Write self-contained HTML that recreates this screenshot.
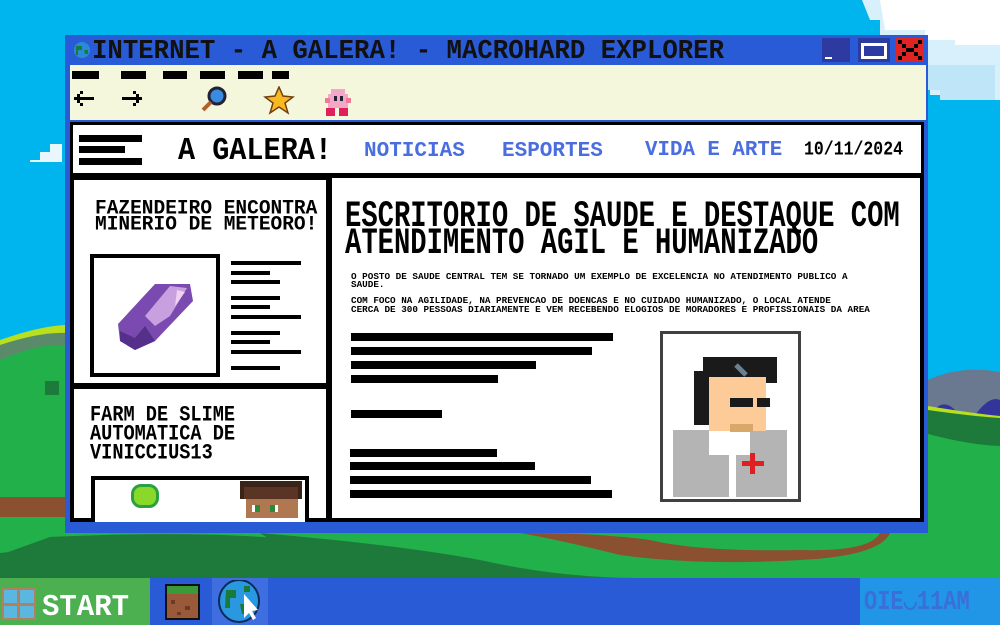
<!DOCTYPE html>
<html><head><meta charset="utf-8"><style>
*{margin:0;padding:0;box-sizing:border-box}
body{width:1000px;height:625px;overflow:hidden;position:relative;background:#00b4ee;font-family:"Liberation Mono",monospace;font-weight:bold}
.a{position:absolute}
.t{position:absolute;white-space:nowrap;line-height:1;transform-origin:0 0}
.b{position:absolute;background:#000}
</style></head><body>
<svg class="a" style="left:0;top:0" width="1000" height="625">
<path d="M862 0 H1000 V100 H960 V95 H930 V80 H928 V35 H880 V20 H870 Z" fill="#d8f0fb"/>
<path d="M880 0 H1000 V45 H955 V40 H925 V30 H885 Z" fill="#fff"/>
<path d="M928 65 H995 V100 H940 V90 H928Z" fill="#bfe6f8"/>
<path d="M30 160 h10 v-8 h10 v-8 h12 v18 h-32z" fill="#e8f6fd"/>
<path d="M928 380 Q960 365 1000 372 V420 H928 Z" fill="#6a7890"/>
<path d="M928 420 Q940 395 955 410 L960 420 Z M975 415 Q990 395 1000 400 V420 Z" fill="#33359a"/>
<path d="M0 340 Q40 326 65 325 V570 H0 Z" fill="#b8e020"/>
<path d="M0 345 Q40 332 65 333 V570 H0Z" fill="#5a8a6a"/>
<path d="M0 360 Q40 343 65 345 V570 H0Z" fill="#22b04b"/>
<path d="M928 406 Q970 413 1000 416 V578 H928Z" fill="#b8e020"/>
<path d="M928 410 Q970 416 1000 418 V578 H928Z" fill="#1e7a3a"/>
<path d="M928 434 Q970 445 1000 446 V578 H928Z" fill="#22b04b"/>
<rect x="0" y="520" width="1000" height="60" fill="#22b04b"/>
<path d="M0 553 Q20 550 45 556 L50 537 Q200 530 300 540 Q330 548 370 578 H0Z" fill="#1e7a3a"/>
<path d="M50 537 Q300 530 420 555 Q480 570 400 578 H0 V555Z" fill="#1e7a3a"/>
<path d="M260 533 Q400 545 480 560 Q560 578 640 578 H380 Q300 560 260 533Z" fill="#1e7a3a"/>
<path d="M520 533 Q560 540 620 555 Q700 566 800 560 Q880 556 890 533 H880 Q870 552 800 550 Q700 552 650 540 Q600 533 520 533Z" fill="#8a5030"/>
<path d="M0 497 H65 V517 H0Z" fill="#8a5030"/>
<rect x="45" y="381" width="14" height="14" fill="#1e7a3a"/>
</svg>

<div class="a" style="left:65px;top:35px;width:863px;height:498px;background:#2a5bd7"></div>
<div class="a" style="left:70px;top:65px;width:856px;height:55px;background:#f4f7dc"></div>
<svg class="a" style="left:72px;top:40px" width="20" height="20"><circle cx="10" cy="10" r="8" fill="#2a8ad8"/><path d="M4 6 h6 v4 h-4 v5 h-2z M12 10 h4 v4 h-3z" fill="#1a7a3a"/></svg>
<div class="t" style="left:92px;top:38px;font-size:25.7px;color:#111;transform:scaleY(1.05)">INTERNET - A GALERA! - MACROHARD EXPLORER</div>
<div class="a" style="left:822px;top:38px;width:28px;height:24px;background:#2d3aa0"></div>
<div class="a" style="left:825px;top:57px;width:7px;height:2px;background:#fff"></div>
<div class="a" style="left:858px;top:38px;width:32px;height:24px;background:#2d3aa0"></div>
<div class="a" style="left:861px;top:43px;width:26px;height:16px;border:3px solid #fff;background:#2d3aa0"></div>
<svg class="a" style="left:896px;top:38px" width="28" height="24"><rect width="28" height="24" fill="#e02424"/><path d="M2 2h4v4h-4zM22 2h4v4h-4zM6 6h4v4h-4zM18 6h4v4h-4zM10 10h8v4h-8zM6 14h4v4h-4zM18 14h4v4h-4zM2 18h4v4h-4zM22 18h4v4h-4z" fill="#000"/></svg>
<div class="b" style="left:72px;top:71px;width:27px;height:8px"></div>
<div class="b" style="left:121px;top:71px;width:25px;height:8px"></div>
<div class="b" style="left:163px;top:71px;width:24px;height:8px"></div>
<div class="b" style="left:200px;top:71px;width:25px;height:8px"></div>
<div class="b" style="left:238px;top:71px;width:25px;height:8px"></div>
<div class="b" style="left:272px;top:71px;width:17px;height:8px"></div>
<svg class="a" style="left:72px;top:86px" width="300" height="32">
<path d="M2 11h20v3H2z M5 8h3v3H5z M8 5h3v3H8z M5 14h3v3H5z M8 17h3v3H8z" fill="#000"/>
<path d="M50 11h20v3H50z M64 8h3v3h-3z M61 5h3v3h-3z M64 14h3v3h-3z M61 17h3v3h-3z" fill="#000"/>
<circle cx="145" cy="10" r="8" fill="#3a8ae0" stroke="#223" stroke-width="3"/>
<path d="M139 16 L131 24" stroke="#b06030" stroke-width="4"/>
<path d="M207 1 L211 10 L221 11 L213 17 L216 27 L207 21 L198 27 L201 17 L193 11 L203 10Z" fill="#f8b820" stroke="#704010" stroke-width="1.5"/>
<rect x="256" y="8" width="20" height="14" fill="#f4a8c8"/><rect x="259" y="3" width="14" height="6" fill="#f4a8c8"/>
<rect x="262" y="10" width="3" height="5" fill="#223"/><rect x="268" y="10" width="3" height="5" fill="#223"/>
<rect x="253" y="12" width="5" height="5" fill="#f07898"/><rect x="274" y="12" width="5" height="5" fill="#f07898"/>
<rect x="254" y="22" width="9" height="8" fill="#e0205a"/><rect x="267" y="22" width="9" height="8" fill="#e0205a"/>
</svg>

<div class="a" style="left:70px;top:122px;width:854px;height:400px;background:#000"></div>
<div class="a" style="left:73px;top:125px;width:848px;height:48px;background:#fff"></div>
<div class="b" style="left:79px;top:135px;width:63px;height:7px"></div>
<div class="b" style="left:79px;top:146px;width:46px;height:7px"></div>
<div class="b" style="left:79px;top:158px;width:63px;height:7px"></div>
<div class="t" style="left:178px;top:136px;font-size:28.5px;color:#000;transform:scaleY(1.1)">A GALERA!</div>
<div class="t" style="left:364px;top:141px;font-size:21px;color:#4a6ee0">NOTICIAS</div>
<div class="t" style="left:502px;top:141px;font-size:21px;color:#4a6ee0">ESPORTES</div>
<div class="t" style="left:645px;top:141px;font-size:20.8px;color:#4a6ee0">VIDA E ARTE</div>
<div class="t" style="left:804px;top:140px;font-size:16.5px;color:#000;transform:scaleY(1.2)">10/11/2024</div>

<div class="a" style="left:74px;top:180px;width:252px;height:203px;background:#fff"></div>
<div class="a" style="left:74px;top:389px;width:252px;height:129px;background:#fff"></div>
<div class="a" style="left:332px;top:178px;width:588px;height:340px;background:#fff"></div>

<div class="t" style="left:95px;top:199px;font-size:19.5px;color:#000;transform:scaleY(1.05)">FAZENDEIRO ENCONTRA</div>
<div class="t" style="left:95px;top:215px;font-size:19.5px;color:#000;transform:scaleY(1.05)">MINERIO DE METEORO!</div>
<div class="a" style="left:90px;top:254px;width:130px;height:123px;border:4px solid #000;background:#fff"></div>
<svg class="a" style="left:115px;top:276px" width="80" height="80"><path d="M40 8 L75 8 L78 25 L40 65 L20 74 L5 65 L3 48Z" fill="#7a4ab0"/><path d="M55 10 L72 12 L55 40 L40 50 L30 40Z" fill="#c8a0e0"/><path d="M62 14 L70 16 L60 30Z" fill="#f0d0f0"/><path d="M5 55 L20 62 L30 50 L40 65 L20 74 L5 65Z" fill="#54308a"/></svg>
<div class="b" style="left:231px;top:261px;width:70px;height:4px"></div>
<div class="b" style="left:231px;top:271px;width:39px;height:4px"></div>
<div class="b" style="left:231px;top:280px;width:49px;height:4px"></div>
<div class="b" style="left:231px;top:296px;width:49px;height:4px"></div>
<div class="b" style="left:231px;top:305px;width:39px;height:4px"></div>
<div class="b" style="left:231px;top:315px;width:70px;height:4px"></div>
<div class="b" style="left:231px;top:331px;width:49px;height:4px"></div>
<div class="b" style="left:231px;top:340px;width:39px;height:4px"></div>
<div class="b" style="left:231px;top:350px;width:70px;height:4px"></div>
<div class="b" style="left:231px;top:366px;width:49px;height:4px"></div>

<div class="t" style="left:90px;top:405px;font-size:18.6px;color:#000;transform:scaleY(1.2)">FARM DE SLIME</div>
<div class="t" style="left:90px;top:424px;font-size:18.6px;color:#000;transform:scaleY(1.2)">AUTOMATICA DE</div>
<div class="t" style="left:90px;top:443px;font-size:18.6px;color:#000;transform:scaleY(1.2)">VINICCIUS13</div>
<div class="a" style="left:91px;top:476px;width:218px;height:46px;border:4px solid #000;border-bottom:none;background:#fff"></div>
<div class="a" style="left:131px;top:484px;width:28px;height:24px;border-radius:10px;background:#8ad82a;border:3px solid #2aa040"></div>
<svg class="a" style="left:240px;top:481px" width="62" height="37"><rect x="0" y="0" width="62" height="18" fill="#3a2418"/><rect x="6" y="18" width="52" height="19" fill="#b07850"/><rect x="4" y="6" width="54" height="12" fill="#5a3424"/><rect x="12" y="24" width="8" height="7" fill="#fff"/><rect x="15" y="24" width="5" height="7" fill="#2a8a3a"/><rect x="30" y="24" width="8" height="7" fill="#fff"/><rect x="30" y="24" width="5" height="7" fill="#2a8a3a"/></svg>

<div class="t" style="left:345px;top:199px;font-size:27.2px;color:#000;transform:scaleY(1.35)">ESCRITORIO DE SAUDE E DESTAQUE COM</div>
<div class="t" style="left:345px;top:226px;font-size:27.2px;color:#000;transform:scaleY(1.35)">ATENDIMENTO AGIL E HUMANIZADO</div>
<div class="t" style="left:351px;top:272px;font-size:9.3px;color:#000">O POSTO DE SAUDE CENTRAL TEM SE TORNADO UM EXEMPLO DE EXCELENCIA NO ATENDIMENTO PUBLICO A</div>
<div class="t" style="left:351px;top:280px;font-size:9.3px;color:#000">SAUDE.</div>
<div class="t" style="left:351px;top:296px;font-size:9.3px;color:#000">COM FOCO NA AGILIDADE, NA PREVENCAO DE DOENCAS E NO CUIDADO HUMANIZADO, O LOCAL ATENDE</div>
<div class="t" style="left:351px;top:305px;font-size:9.3px;color:#000">CERCA DE 300 PESSOAS DIARIAMENTE E VEM RECEBENDO ELOGIOS DE MORADORES E PROFISSIONAIS DA AREA</div>
<div class="b" style="left:351px;top:333px;width:262px;height:8px"></div>
<div class="b" style="left:351px;top:347px;width:241px;height:8px"></div>
<div class="b" style="left:351px;top:361px;width:185px;height:8px"></div>
<div class="b" style="left:351px;top:375px;width:147px;height:8px"></div>
<div class="b" style="left:351px;top:410px;width:91px;height:8px"></div>
<div class="b" style="left:350px;top:449px;width:147px;height:8px"></div>
<div class="b" style="left:350px;top:462px;width:185px;height:8px"></div>
<div class="b" style="left:350px;top:476px;width:241px;height:8px"></div>
<div class="b" style="left:350px;top:490px;width:262px;height:8px"></div>
<svg class="a" style="left:660px;top:331px" width="142" height="171">
<rect x="1.5" y="1.5" width="138" height="168" fill="#fff" stroke="#404040" stroke-width="3"/>
<rect x="13" y="99" width="114" height="67" fill="#b4b4b4"/>
<rect x="69" y="99" width="7" height="67" fill="#fff"/>
<rect x="49" y="99" width="41" height="25" fill="#fff"/>
<rect x="49" y="46" width="57" height="54" fill="#fdcb98"/>
<rect x="43" y="26" width="74" height="20" fill="#1a1a1a"/>
<rect x="106" y="46" width="11" height="6" fill="#1a1a1a"/>
<rect x="34" y="40" width="15" height="54" fill="#1a1a1a"/>
<rect x="70" y="67" width="23" height="9" fill="#1a1a1a"/><rect x="97" y="67" width="13" height="9" fill="#1a1a1a"/>
<rect x="70" y="93" width="23" height="8" fill="#d8a868"/>
<path d="M76 34 L86 44" stroke="#6a8090" stroke-width="5"/>
<rect x="82" y="130" width="22" height="5" fill="#e02020"/><rect x="90" y="122" width="5" height="21" fill="#e02020"/>
</svg>

<div class="a" style="left:0;top:578px;width:150px;height:47px;background:#4caf50"></div>
<div class="a" style="left:150px;top:578px;width:710px;height:47px;background:#2a5bd7"></div>
<div class="a" style="left:860px;top:578px;width:140px;height:47px;background:#2196e6"></div>
<svg class="a" style="left:2px;top:588px" width="34" height="32"><rect x="0" y="0" width="34" height="32" fill="#b08060"/><rect x="2" y="2" width="13" height="13" fill="#5ab8e0"/><rect x="18" y="2" width="14" height="13" fill="#5ab8e0"/><rect x="2" y="18" width="13" height="12" fill="#5ab8e0"/><rect x="18" y="18" width="14" height="12" fill="#5ab8e0"/></svg>
<div class="t" style="left:42px;top:592px;font-size:29px;color:#fff;transform:scaleY(1.05)">START</div>
<svg class="a" style="left:165px;top:584px" width="35" height="36"><rect width="35" height="36" fill="#111"/><rect x="2" y="2" width="31" height="32" fill="#9a5a3a"/><rect x="2" y="2" width="31" height="8" fill="#3a9a3a"/><rect x="6" y="16" width="4" height="4" fill="#6a3a2a"/><rect x="20" y="22" width="5" height="4" fill="#6a3a2a"/><rect x="12" y="28" width="4" height="3" fill="#6a3a2a"/></svg>
<div class="a" style="left:212px;top:578px;width:56px;height:47px;background:#3f6ee0"></div>
<svg class="a" style="left:218px;top:580px" width="44" height="43"><ellipse cx="21" cy="21" rx="20" ry="21" fill="#2a98e0" stroke="#0a2a5a" stroke-width="2"/><path d="M8 10 h10 v8 h-6 v10 h-5z M22 24 h8 v10 h-6z M26 6 h6 v6 h-6z" fill="#1a7a3a"/><path d="M26 14 L26 38 L31 33 L35 40 L38 38 L34 31 L40 30Z" fill="#fff"/></svg>
<div class="t" style="left:864px;top:590px;font-size:22px;color:#3a6ed8;transform:scaleY(1.2)">OIE◡11AM</div>
</body></html>
